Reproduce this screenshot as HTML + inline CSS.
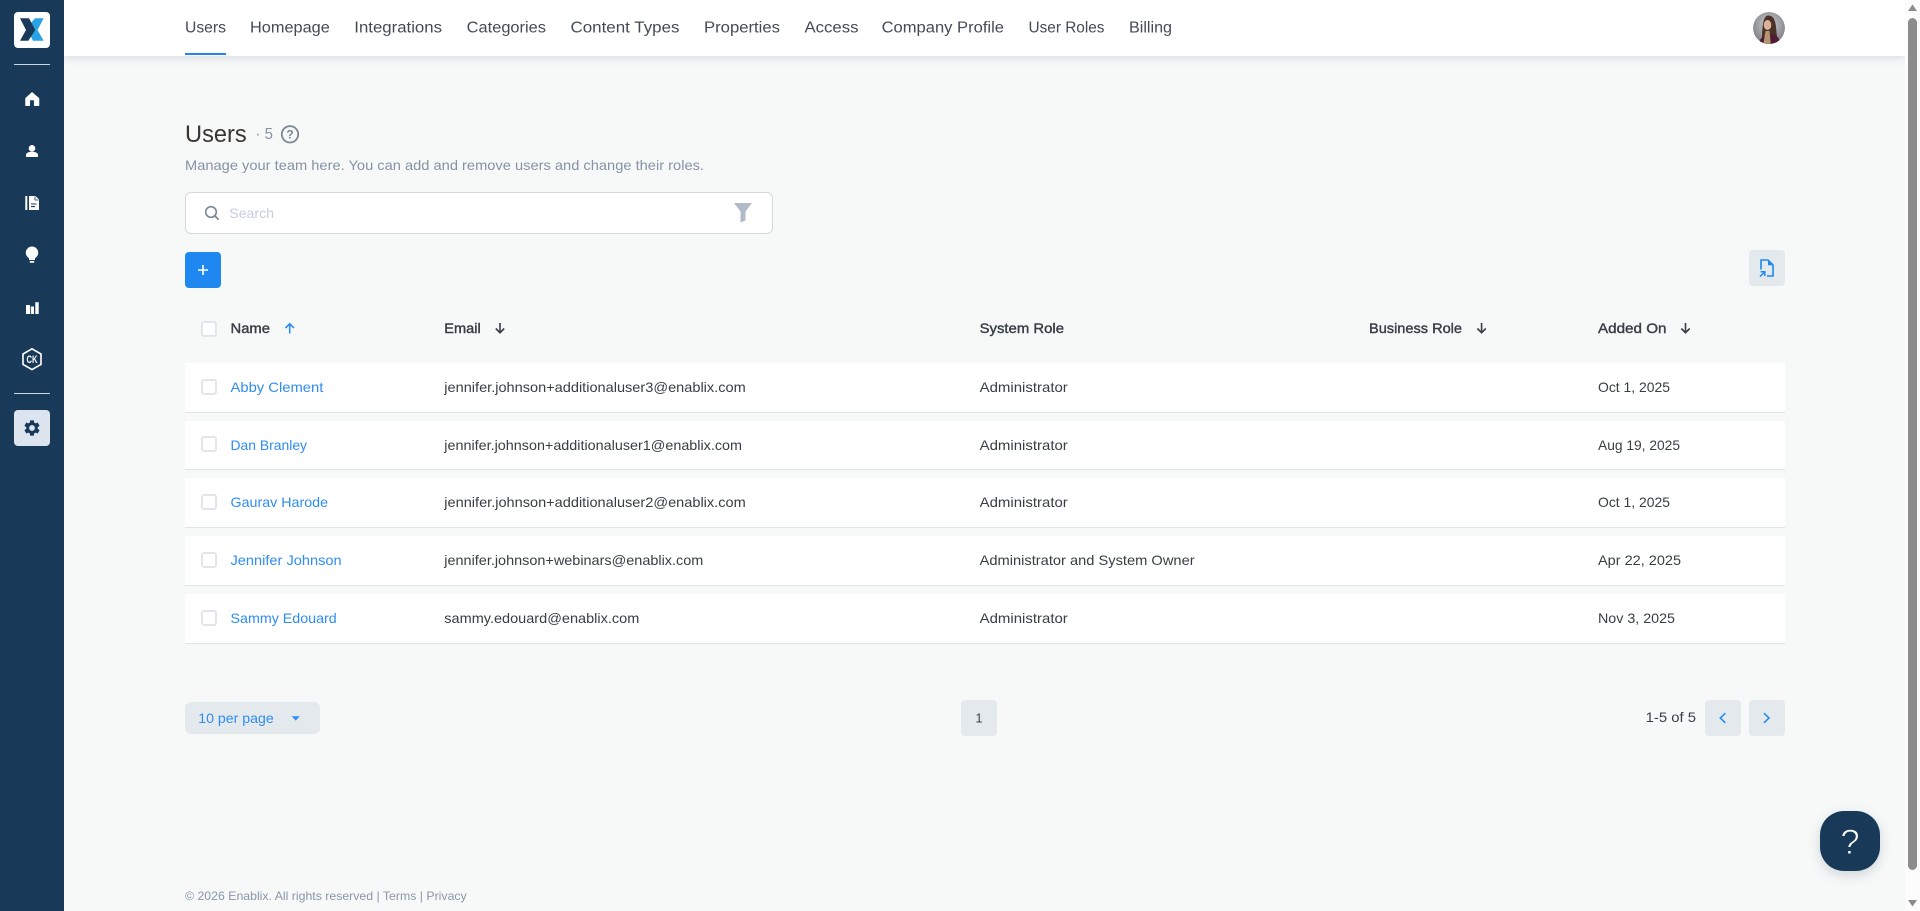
<!DOCTYPE html>
<html lang="en"><head><meta charset="utf-8"><title>Users</title>
<style>
html,body{margin:0;padding:0;width:1920px;height:911px;overflow:hidden;background:#f7f9f9}
div{position:absolute;box-sizing:border-box}
#side{left:0;top:0;width:64px;height:911px;background:#183a58}
#top{left:64px;top:0;width:1841px;height:56px;background:#fff;box-shadow:0 2px 8px rgba(60,70,80,.16)}
#sb{left:1905px;top:0;width:15px;height:911px;background:#fcfcfc}
#thumb{left:1908px;top:18px;width:9px;height:852px;background:#8c8c8c;border-radius:5px}
.r{left:185px;width:1600px;height:50px;background:#fff;border-bottom:1px solid #dfe4ec}
.g{background:#e4e9ee;border-radius:4px}
.c{width:16px;height:16px;background:#fff;border:2px solid #e2e6ec;border-radius:3px;left:201px}
svg{position:absolute;left:0;top:0}
text{font-family:"Liberation Sans",sans-serif;font-size:14px;fill:#383e45}
.n text{font-size:15.5px;fill:#454b54}
.h text{stroke:#383e45;stroke-width:.4px}
.l text{fill:#2f8df2}
</style></head><body>
<div id="top"></div>
<div id="side"></div>
<div id="sb"></div><div id="thumb"></div>
<div style="left:14px;top:12px;width:36px;height:36px;background:#fff;border-radius:4px"></div>
<div style="left:14px;top:64px;width:36px;height:1px;background:#cfd8e0"></div>
<div style="left:14px;top:393px;width:36px;height:1px;background:#cfd8e0"></div>
<div style="left:14px;top:410px;width:36px;height:36px;background:#dce5ef;border-radius:4px"></div>
<div style="left:185px;top:53px;width:41px;height:2px;background:#1e88f0"></div>
<div style="left:185px;top:192px;width:588px;height:42px;background:#fff;border:1px solid #d5d8dc;border-radius:6px"></div>
<div style="left:185px;top:252px;width:36px;height:36px;background:#1e88f0;border-radius:4px"></div>
<div class="g" style="left:1749px;top:250px;width:36px;height:36px"></div>
<div class="r" style="top:363px"></div>
<div class="r" style="top:421px;height:49px"></div>
<div class="r" style="top:478px"></div>
<div class="r" style="top:536px"></div>
<div class="r" style="top:594px"></div>
<div class="c" style="top:321px"></div>
<div class="c" style="top:379px"></div>
<div class="c" style="top:436px"></div>
<div class="c" style="top:494px"></div>
<div class="c" style="top:552px"></div>
<div class="c" style="top:610px"></div>
<div class="g" style="left:185px;top:702px;width:135px;height:32px;border-radius:6px"></div>
<div class="g" style="left:961px;top:700px;width:36px;height:36px"></div>
<div class="g" style="left:1705px;top:700px;width:36px;height:36px"></div>
<div class="g" style="left:1749px;top:700px;width:36px;height:36px"></div>
<div style="left:1820px;top:811px;width:60px;height:60px;background:#183a58;border-radius:24px;box-shadow:0 4px 12px rgba(30,50,70,.18)"></div>

<svg width="1920" height="911" viewBox="0 0 1920 911" xmlns="http://www.w3.org/2000/svg">
<defs>
<radialGradient id="av" cx="50%" cy="40%" r="60%"><stop offset="0" stop-color="#cfd1d3"/><stop offset="1" stop-color="#7d7f84"/></radialGradient>
<clipPath id="ac"><circle cx="1769" cy="28" r="16"/></clipPath>
</defs>
<!-- logo -->
<polygon points="35,18.3 43.7,18.3 37.5,30 43.7,40.7 33,40.7 30,35 35.3,30 31,23" fill="#2aa3e6"/>
<polygon points="20,18.3 29,18.3 35.3,30 28.3,40.7 20,40.7 26,30" fill="#183a58"/>
<!-- sidebar icons -->
<path d="M32 92.3 39 98.2V105.7H34.2V100H29.8V105.7H25.5V98.2Z" fill="#fff" stroke="#fff" stroke-width=".5" stroke-linejoin="round"/>
<circle cx="32" cy="148.3" r="3.3" fill="#fff"/>
<path d="M26 157V155C26 152.8 29 151.8 32 151.8S38 152.8 38 155V157Z" fill="#fff"/>
<rect x="25.3" y="196" width="2" height="14" fill="#fff"/>
<path d="M29 196H35.5L39 199.5V210H29Z" fill="#fff"/>
<path d="M35 196.5V200H38.5" fill="none" stroke="#183a58" stroke-width=".8"/>
<path d="M31 204H36.5M31 206.6H35" stroke="#183a58" stroke-width="1.1"/>
<circle cx="32" cy="252.7" r="6.2" fill="#fff"/>
<path d="M29 258H35V260H29ZM29.8 261H34.2V262.7H29.8Z" fill="#fff"/>
<path d="M26 305H30V314H26ZM30.8 306.5H34V314H30.8ZM35.3 302.3H38.7V314H35.3Z" fill="#fff"/>
<polygon points="32,348.8 41,354 41,364.4 32,369.6 23,364.4 23,354" fill="none" stroke="#fff" stroke-width="1.6"/>
<text x="32" y="363" text-anchor="middle" textLength="11" lengthAdjust="spacingAndGlyphs" style="font-size:11px;font-weight:bold;fill:#fff">CK</text>
<path transform="translate(22.4 418.4) scale(.8)" fill="#183a58" d="M19.14 12.94c.04-.3.06-.61.06-.94 0-.32-.02-.64-.07-.94l2.03-1.58a.49.49 0 0 0 .12-.61l-1.92-3.32a.488.488 0 0 0-.59-.22l-2.39.96c-.5-.38-1.03-.7-1.62-.94l-.36-2.54a.484.484 0 0 0-.48-.41h-3.84c-.24 0-.43.17-.47.41l-.36 2.54c-.59.24-1.13.57-1.62.94l-2.39-.96c-.22-.08-.47 0-.59.22L2.74 8.87c-.12.21-.08.47.12.61l2.03 1.58c-.05.3-.09.63-.09.94s.02.64.07.94l-2.03 1.58a.49.49 0 0 0-.12.61l1.92 3.32c.12.22.37.29.59.22l2.39-.96c.5.38 1.03.7 1.62.94l.36 2.54c.05.24.24.41.48.41h3.84c.24 0 .44-.17.47-.41l.36-2.54c.59-.24 1.13-.56 1.62-.94l2.39.96c.22.08.47 0 .59-.22l1.92-3.32c.12-.22.07-.47-.12-.61l-2.01-1.58zM12 15.6c-1.98 0-3.6-1.62-3.6-3.6s1.62-3.6 3.6-3.6 3.6 1.62 3.6 3.6-1.62 3.6-3.6 3.6z"/>
<!-- nav -->
<g class="n">
<text x="185" y="32.5" textLength="41" lengthAdjust="spacingAndGlyphs">Users</text>
<text x="250" y="32.5" textLength="79.8" lengthAdjust="spacingAndGlyphs">Homepage</text>
<text x="354.3" y="32.5" textLength="87.7" lengthAdjust="spacingAndGlyphs">Integrations</text>
<text x="466.7" y="32.5" textLength="79.3" lengthAdjust="spacingAndGlyphs">Categories</text>
<text x="570.5" y="32.5" textLength="109" lengthAdjust="spacingAndGlyphs">Content Types</text>
<text x="704" y="32.5" textLength="76" lengthAdjust="spacingAndGlyphs">Properties</text>
<text x="804.5" y="32.5" textLength="54" lengthAdjust="spacingAndGlyphs">Access</text>
<text x="881.6" y="32.5" textLength="122.4" lengthAdjust="spacingAndGlyphs">Company Profile</text>
<text x="1028.5" y="32.5" textLength="76" lengthAdjust="spacingAndGlyphs">User Roles</text>
<text x="1129" y="32.5" textLength="43" lengthAdjust="spacingAndGlyphs">Billing</text>
</g>
<!-- avatar -->
<g clip-path="url(#ac)">
<circle cx="1769" cy="28" r="16" fill="url(#av)"/>
<path d="M1762 46C1762 32 1762 16 1768 15.5C1775 15 1776 24 1776.5 32L1778 46Z" fill="#4a3226"/>
<ellipse cx="1767.5" cy="25" rx="3.8" ry="5" fill="#dcb09a"/>
<path d="M1758 46C1759 39 1763 36 1767 35L1773 34C1778 36 1780 39 1781 46Z" fill="#4f1c33"/>
<path d="M1765.5 31H1769.5L1771 46H1763Z" fill="#b59472"/>
</g>
<!-- heading -->
<text x="185" y="142" textLength="61.7" lengthAdjust="spacingAndGlyphs" style="font-size:24px;fill:#3a3532">Users</text>
<text x="255.5" y="139" textLength="17.5" lengthAdjust="spacingAndGlyphs" style="font-size:16px;fill:#8a94a2">· 5</text>
<circle cx="290" cy="134.3" r="8.2" fill="none" stroke="#7b8794" stroke-width="1.8"/>
<text x="290" y="138.5" text-anchor="middle" style="font-size:12px;font-weight:bold;fill:#7b8794">?</text>
<text x="185" y="170" textLength="519" lengthAdjust="spacingAndGlyphs" style="fill:#8593a5">Manage your team here. You can add and remove users and change their roles.</text>
<!-- search -->
<circle cx="211" cy="212" r="5.3" fill="none" stroke="#7b8794" stroke-width="1.6"/>
<path d="M215 216 218.7 219.7" stroke="#7b8794" stroke-width="1.7"/>
<text x="229.3" y="218" textLength="44.7" lengthAdjust="spacingAndGlyphs" style="fill:#c5cde0">Search</text>
<path d="M734 203H752L745.5 211.5V220.5L740.5 222.5V211.5Z" fill="#b0bac8"/>
<!-- add -->
<path d="M203 265V275M198 270H208" stroke="#fff" stroke-width="1.6"/>
<!-- export -->
<path d="M1761 269.5V260H1768L1773 265V276H1767" fill="none" stroke="#1e88f0" stroke-width="1.6"/>
<path d="M1768 260.5V265.2H1772.5Z" fill="#1e88f0"/>
<path d="M1760 276.6 1764 272.6M1760.6 271.8H1764.8V276" fill="none" stroke="#1e88f0" stroke-width="1.5"/>
<!-- header row -->
<g class="h">
<text x="230.5" y="333" textLength="39.5" lengthAdjust="spacingAndGlyphs">Name</text>
<text x="444.3" y="333" textLength="36.4" lengthAdjust="spacingAndGlyphs">Email</text>
<text x="979.6" y="333" textLength="84.4" lengthAdjust="spacingAndGlyphs">System Role</text>
<text x="1369" y="333" textLength="93" lengthAdjust="spacingAndGlyphs">Business Role</text>
<text x="1598" y="333" textLength="68.5" lengthAdjust="spacingAndGlyphs">Added On</text>
</g>
<path d="M289.7 333.5V324M285.5 328 289.7 323.8 293.9 328" fill="none" stroke="#2f8df2" stroke-width="1.6"/>
<path d="M500 323V332.5M495.8 328.5 500 332.7 504.2 328.5" fill="none" stroke="#383e45" stroke-width="1.6"/>
<path d="M1481.6 323V332.5M1477.4 328.5 1481.6 332.7 1485.8 328.5" fill="none" stroke="#383e45" stroke-width="1.6"/>
<path d="M1685.5 323V332.5M1681.3 328.5 1685.5 332.7 1689.7 328.5" fill="none" stroke="#383e45" stroke-width="1.6"/>
<!-- rows -->
<g class="l">
<text x="230.5" y="392" textLength="92.8" lengthAdjust="spacingAndGlyphs">Abby Clement</text>
<text x="230.5" y="450" textLength="76.5" lengthAdjust="spacingAndGlyphs">Dan Branley</text>
<text x="230.5" y="507" textLength="97.5" lengthAdjust="spacingAndGlyphs">Gaurav Harode</text>
<text x="230.5" y="565" textLength="111.1" lengthAdjust="spacingAndGlyphs">Jennifer Johnson</text>
<text x="230.5" y="623" textLength="106.2" lengthAdjust="spacingAndGlyphs">Sammy Edouard</text>
</g>
<text x="444.3" y="392" textLength="301.4" lengthAdjust="spacingAndGlyphs">jennifer.johnson+additionaluser3@enablix.com</text>
<text x="444.3" y="450" textLength="297.7" lengthAdjust="spacingAndGlyphs">jennifer.johnson+additionaluser1@enablix.com</text>
<text x="444.3" y="507" textLength="301.4" lengthAdjust="spacingAndGlyphs">jennifer.johnson+additionaluser2@enablix.com</text>
<text x="444.3" y="565" textLength="259" lengthAdjust="spacingAndGlyphs">jennifer.johnson+webinars@enablix.com</text>
<text x="444.3" y="623" textLength="195" lengthAdjust="spacingAndGlyphs">sammy.edouard@enablix.com</text>
<text x="979.6" y="392" textLength="88.2" lengthAdjust="spacingAndGlyphs">Administrator</text>
<text x="979.6" y="450" textLength="88.2" lengthAdjust="spacingAndGlyphs">Administrator</text>
<text x="979.6" y="507" textLength="88.2" lengthAdjust="spacingAndGlyphs">Administrator</text>
<text x="979.6" y="565" textLength="215" lengthAdjust="spacingAndGlyphs">Administrator and System Owner</text>
<text x="979.6" y="623" textLength="88.2" lengthAdjust="spacingAndGlyphs">Administrator</text>
<text x="1598" y="392" textLength="72" lengthAdjust="spacingAndGlyphs">Oct 1, 2025</text>
<text x="1598" y="450" textLength="82" lengthAdjust="spacingAndGlyphs">Aug 19, 2025</text>
<text x="1598" y="507" textLength="72" lengthAdjust="spacingAndGlyphs">Oct 1, 2025</text>
<text x="1598" y="565" textLength="83" lengthAdjust="spacingAndGlyphs">Apr 22, 2025</text>
<text x="1598" y="623" textLength="77" lengthAdjust="spacingAndGlyphs">Nov 3, 2025</text>
<!-- pagination -->
<text x="198.3" y="723" textLength="75.4" lengthAdjust="spacingAndGlyphs" style="fill:#2f8df2">10 per page</text>
<polygon points="291.7,716.2 299.7,716.2 295.7,720.6" fill="#2f8df2"/>
<text x="979" y="722.5" text-anchor="middle" style="font-size:12.5px">1</text>
<text x="1645.7" y="722" textLength="50.3" lengthAdjust="spacingAndGlyphs">1-5 of 5</text>
<path d="M1725.3 713.2 1720.3 718 1725.3 722.8" fill="none" stroke="#1e88f0" stroke-width="1.5"/>
<path d="M1764 713.2 1769 718 1764 722.8" fill="none" stroke="#1e88f0" stroke-width="1.5"/>
<!-- help -->
<text x="1850" y="854" text-anchor="middle" stroke="#183a58" stroke-width=".9" style="font-size:35px;fill:#fff">?</text>
<!-- footer -->
<text x="185" y="900" textLength="281.7" lengthAdjust="spacingAndGlyphs" style="font-size:12px;fill:#8a96a8">© 2026 Enablix. All rights reserved | Terms | Privacy</text>
<!-- scrollbar arrows -->
<polygon points="1912.5,4.5 1917,11 1908,11" fill="#8c8c8c"/>
<polygon points="1908,900 1917,900 1912.5,906.5" fill="#8c8c8c"/>
</svg>
</body></html>
